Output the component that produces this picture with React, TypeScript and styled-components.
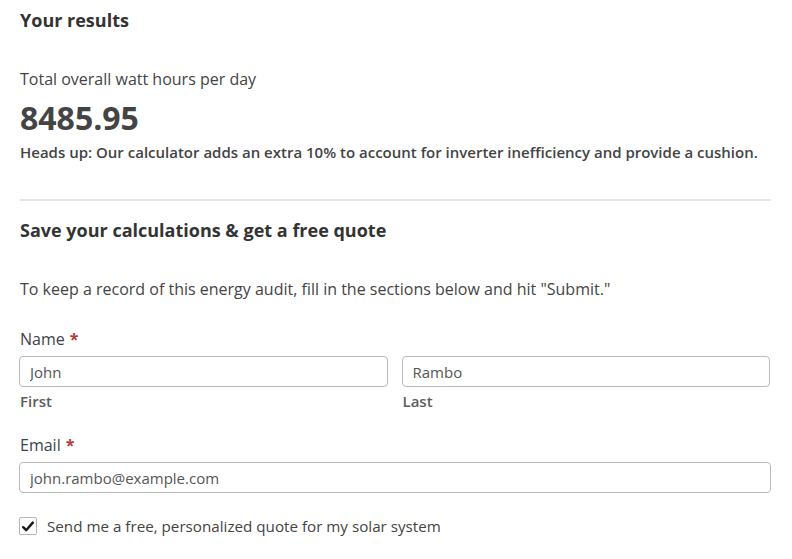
import React from "react";
import styled, { createGlobalStyle } from "styled-components";

const Global = createGlobalStyle`
  html, body { margin: 0; padding: 0; background: #ffffff; }
  body { font-family: "Open Sans", "Noto Sans", sans-serif; color: #444444; }
  * { box-sizing: border-box; }
`;

const Page = styled.div`
  padding: 8px 21px 0 20px;
  display: flex;
  flex-direction: column;
`;

const Heading = styled.h2`
  margin: 0;
  font-size: 18px;
  line-height: 24px;
  font-weight: 700;
  color: #333333;
`;

const Results = styled.section`
  display: flex;
  flex-direction: column;
  padding-bottom: 37px;
  border-bottom: 2px solid #e6e6e6;
`;

const Caption = styled.p`
  margin: 36px 0 0;
  font-size: 16px;
  line-height: 22px;
  color: #444444;
`;

const BigNumber = styled.div`
  font-size: 32px;
  line-height: 40px;
  font-weight: 700;
  color: #444444;
  margin-top: 8px;
`;

const Note = styled.p`
  margin: 4px 0 0;
  font-size: 15px;
  line-height: 20px;
  font-weight: 600;
  color: #444444;
`;

const Quote = styled.section`
  display: flex;
  flex-direction: column;
  padding-top: 17px;
`;

const Intro = styled.p`
  margin: 36px 0 0;
  font-size: 16px;
  line-height: 22px;
  color: #444444;
`;

const Field = styled.div<{ $top: number }>`
  display: flex;
  flex-direction: column;
  margin-top: ${(p) => p.$top}px;
`;

const Label = styled.label`
  font-size: 16px;
  line-height: 22px;
  color: #3b4250;
  margin-bottom: 6px;
`;

const Required = styled.span`
  color: #b13b3b;
  font-weight: 700;
  margin-left: 5px;
`;

const NameRow = styled.div`
  display: grid;
  grid-template-columns: 1fr 1fr;
  column-gap: 14px;
`;

const SubField = styled.div`
  display: flex;
  flex-direction: column;
`;

const Input = styled.input`
  width: 100%;
  height: 31px;
  margin: 0 0 0 -1px;
  padding: 0 10px;
  border: 1px solid #b9b9c0;
  border-radius: 4px;
  font-family: "Open Sans", "Noto Sans", sans-serif;
  font-size: 15px;
  color: #555555;
  background: #ffffff;
  outline: none;
`;

const WideInput = styled(Input)`
  width: calc(100% + 1px);
`;

const SubLabel = styled.span`
  font-size: 15px;
  line-height: 20px;
  font-weight: 600;
  color: #5c5c5c;
  margin-top: 4px;
`;

const CheckRow = styled.label`
  display: flex;
  align-items: center;
  gap: 10px;
  margin-top: 22px;
  font-size: 15.2px;
  line-height: 22px;
  color: #444444;
`;

const Box = styled.span`
  width: 18px;
  height: 18px;
  margin-left: -1px;
  border: 1px solid #b4b4bc;
  border-radius: 2px;
  display: flex;
  align-items: center;
  justify-content: center;
  background: #fff;
  flex-shrink: 0;
`;

export default function App() {
  return (
    <>
      <Global />
      <Page>
        <Results>
          <Heading>Your results</Heading>
          <Caption>Total overall watt hours per day</Caption>
          <BigNumber>8485.95</BigNumber>
          <Note>
            Heads up: Our calculator adds an extra 10% to account for inverter
            inefficiency and provide a cushion.
          </Note>
        </Results>
        <Quote>
          <Heading>Save your calculations &amp; get a free quote</Heading>
          <Intro>
            To keep a record of this energy audit, fill in the sections below and
            hit "Submit."
          </Intro>
          <Field $top={28}>
            <Label>
              Name<Required>*</Required>
            </Label>
            <NameRow>
              <SubField>
                <Input defaultValue="John" />
                <SubLabel>First</SubLabel>
              </SubField>
              <SubField>
                <Input defaultValue="Rambo" />
                <SubLabel>Last</SubLabel>
              </SubField>
            </NameRow>
          </Field>
          <Field $top={23}>
            <Label>
              Email<Required>*</Required>
            </Label>
            <WideInput defaultValue="john.rambo@example.com" />
          </Field>
          <CheckRow>
            <Box>
              <svg width="12" height="11" viewBox="0 0 12 11">
                <path
                  d="M1.2 6.2 L4.2 9.2 L10.8 1.6"
                  fill="none"
                  stroke="#1a1a1a"
                  strokeWidth="2.4"
                  strokeLinecap="round"
                  strokeLinejoin="round"
                />
              </svg>
            </Box>
            Send me a free, personalized quote for my solar system
          </CheckRow>
        </Quote>
      </Page>
    </>
  );
}
